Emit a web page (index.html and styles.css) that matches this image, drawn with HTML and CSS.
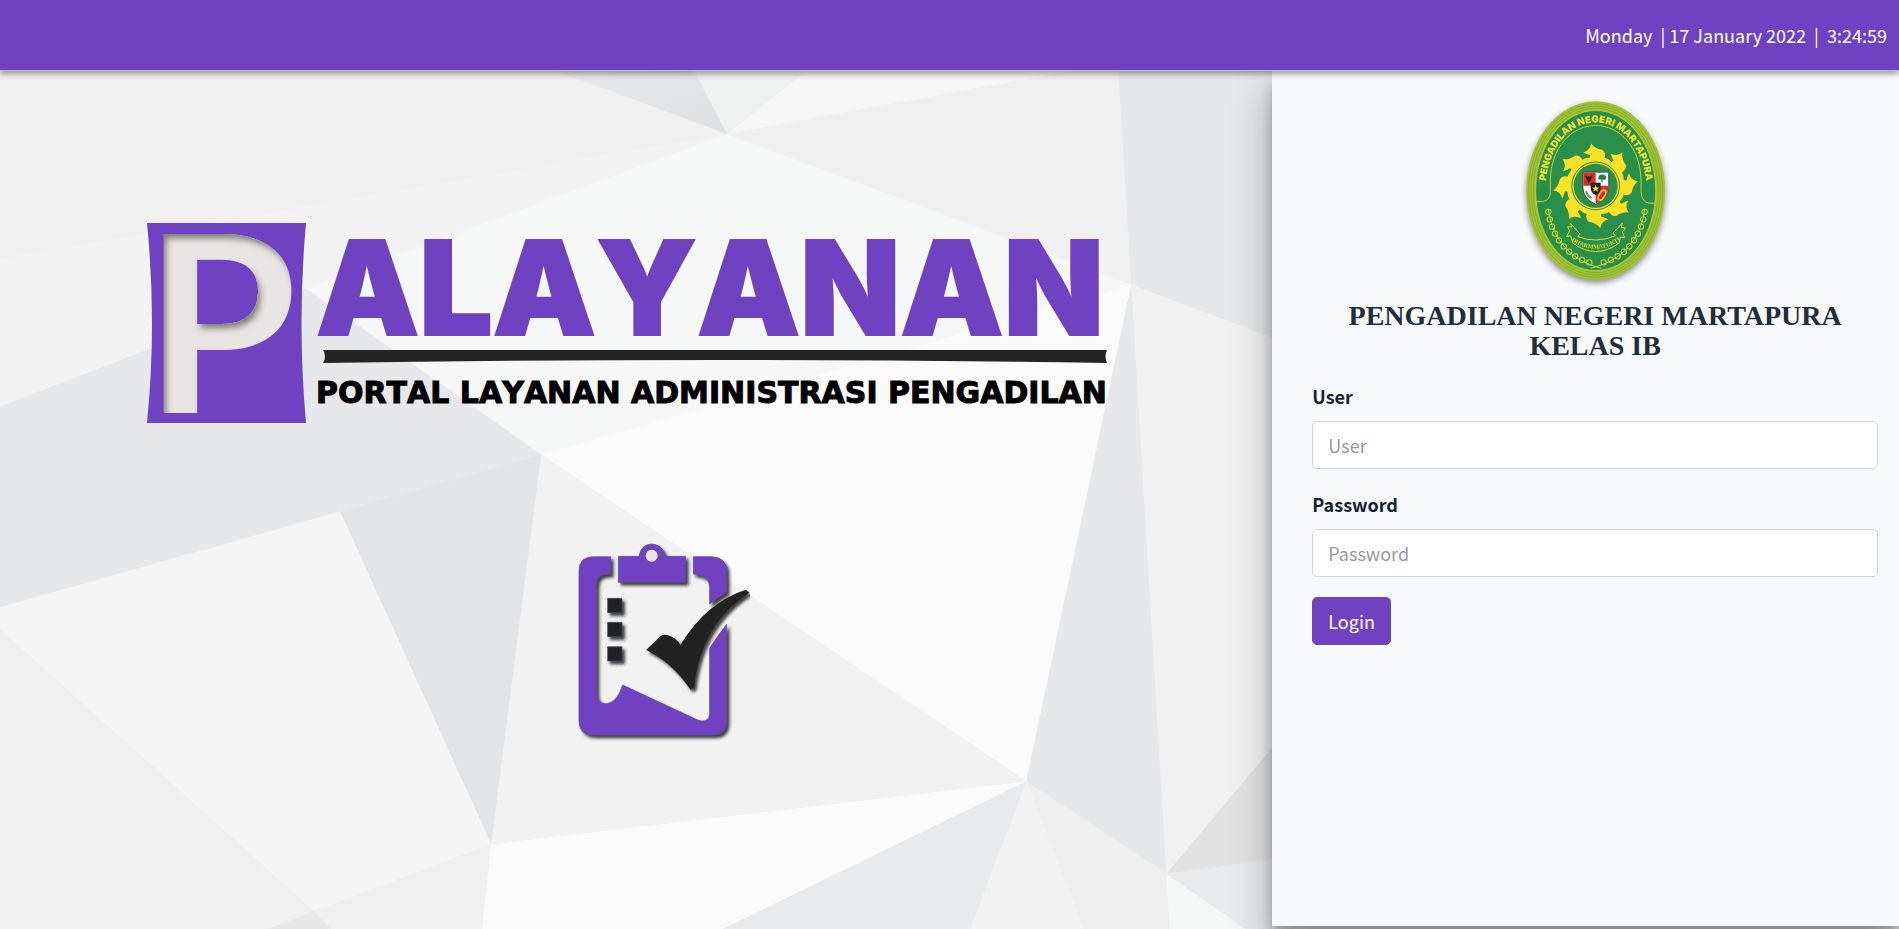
FILE: index.html
```html
<!DOCTYPE html>
<html lang="id">
<head>
<meta charset="utf-8">
<title>PALAYANAN</title>
<link rel="stylesheet" href="styles.css">
</head>
<body>
<header class="topbar"><time class="clock">Monday&nbsp; | 17 January 2022&nbsp; |&nbsp; 3:24:59</time></header>
<main class="page">
  <section class="hero">
    <svg class="hero-bg" viewBox="0 70 1272 859" preserveAspectRatio="none" aria-hidden="true">
      <defs>
        <linearGradient id="dark" x1="0" y1="0" x2="1" y2="1"><stop offset="0" stop-color="#e9ebec"/><stop offset="1" stop-color="#dddfe1"/></linearGradient>
      </defs>
      <path fill="#f0f0f0" d="M0 70H1272V929H0Z"/>
      <path fill="#f3f3f3" d="M727 133L0 258V406L306 288Z"/>
      <path fill="url(#dark)" d="M556 70H694L727 133Z"/>
      <path fill="#eff1f1" d="M694 70H806L727 133Z"/>
      <path fill="#f6f6f6" d="M806 70H1070L727 133Z"/>
      <path fill="#e6e8ea" d="M1118 70H1272V337L1131 284Z"/>
      <path fill="#f6f8f8" d="M306 288L727 133L1131 284L541 454Z"/>
      <path fill="#fbfbfb" d="M1131 284L541 454L1026 781Z"/>
      <path fill="#f1f1f1" d="M1131 284L1272 337V747L1166 874Z"/>
      <path fill="#e6e8e9" d="M1131 284L1166 874L1026 781Z"/>
      <path fill="#e2e2e2" d="M1272 747V859L1166 874Z"/>
      <path fill="#e8eaec" d="M1272 859V929H1245L1166 874Z"/>
      <path fill="#f5f7f6" d="M1166 874L1245 929H1169Z"/>
      <path fill="#eeeeee" d="M1026 781L1166 874L1169 929H1084Z"/>
      <path fill="#f2f2f2" d="M1026 781L1084 929H970Z"/>
      <path fill="#e8eaec" d="M1026 781L970 929H722Z"/>
      <path fill="#fbfbfb" d="M491 844L1026 781L722 929H482Z"/>
      <path fill="#f2f2f2" d="M541 454L1026 781L491 844Z"/>
      <path fill="#e6e8ea" d="M306 288L541 454L340 511L0 607V406Z"/>
      <path fill="#e2e4e6" d="M541 454L340 511L491 844Z"/>
      <path fill="#f5f5f5" d="M340 511L491 844L314 911L0 629V607Z"/>
      <path fill="#e8e8e8" d="M314 911L331 929H268Z"/>
    </svg>
    <div class="hero-content">
      <svg class="wordmark" viewBox="136 213 1000 220" role="img" aria-label="PALAYANAN, Portal Layanan Administrasi Pengadilan">
        <defs>
          <filter id="inset" x="-10%" y="-10%" width="120%" height="120%">
            <feComponentTransfer in="SourceAlpha"><feFuncA type="table" tableValues="1 0"/></feComponentTransfer>
            <feGaussianBlur stdDeviation="3"/>
            <feOffset dx="3" dy="5"/>
            <feComposite in2="SourceAlpha" operator="in"/>
            <feColorMatrix result="shade" values="0 0 0 0 .2  0 0 0 0 .2  0 0 0 0 .15  0 0 0 1 0"/>
            <feMerge><feMergeNode in="SourceGraphic"/><feMergeNode in="shade"/></feMerge>
          </filter>
        </defs>
        <path fill="#6f42c1" d="M147 223H306Q297 323 306 423H147Q157 323 147 223Z"/>
        <text class="mark-p" x="144" y="413" filter="url(#inset)">P</text>
        <text class="mark-name" x="316" y="335">ALAYANAN</text>
        <path fill="#242424" d="M323 350H1107Q1104 356 1107 363Q715 357 323 363Q327 356 323 350Z"/>
        <text class="mark-sub" x="316" y="403">PORTAL LAYANAN ADMINISTRASI PENGADILAN</text>
      </svg>
      <svg class="clipboard" viewBox="-114 0 684 660" role="img" aria-label="Clipboard">
        <defs><filter id="drop" x="-10%" y="-10%" width="125%" height="125%"><feDropShadow dx="8" dy="9" stdDeviation="4" flood-color="#222" flood-opacity=".85"/></filter></defs>
        <g filter="url(#drop)" fill="#6f42c1" stroke="#5c4a92" stroke-width="2">
          <path d="M152 80H98Q57 82 57 122V572Q57 615 100 615H458Q500 615 500 572V283Q470 320 449 355V552Q447 575 425 573Q415 572 400 564L188 465Q170 520 138 521Q109 520 109 488V165Q109 134 140 133H152Z"/>
          <path d="M400 80H455Q500 82 500 125V187Q470 205 449 222V168Q447 135 400 132Z"/>
          <path d="M175 79H237Q243 43 275 42Q308 43 316 79H377V157H175Z"/>
        </g>
        <circle cx="275" cy="77" r="18" fill="#e8e4e4"/>
        <g filter="url(#drop)" fill="#242424">
          <path stroke="#3b5160" stroke-width="2" d="M143 205H186V248H143ZM143 277H186V320H143ZM143 350H186V393H143Z"/>
          <path d="M258 360L302 318Q312 312 325 316Q348 323 361 345Q440 215 558 179L568 188C450 265 415 370 402 470L392 480Q335 395 258 360Z"/>
        </g>
      </svg>
    </div>
  </section>
  <aside class="panel">
    <svg class="seal" viewBox="75 64 417 536" role="img" aria-label="Pengadilan Negeri Martapura">
      <defs>
        <path id="arc" d="M133 345C131 215 200 128 284 128S439 215 437 345"/>
        <path id="rib" d="M210 482Q284 532 360 480"/>
        <path id="flame" d="M-52 -64Q-14 -74 -16 -92Q-28 -95 -38 -100Q-16 -106 -14 -127Q0 -110 20 -108Q32 -99 27 -84Q40 -82 54 -64Z"/>
      </defs>
      <ellipse cx="284" cy="332" rx="208" ry="268" fill="#a3c22f"/>
      <g fill="none" stroke="#6fa836" stroke-width="2"><ellipse cx="284" cy="332" rx="201" ry="260"/><ellipse cx="284" cy="332" rx="194" ry="253"/><ellipse cx="284" cy="332" rx="187" ry="246"/></g>
      <ellipse cx="284" cy="332" rx="180" ry="240" fill="#2b8f4c" stroke="#d4d82c" stroke-width="2"/>
      <path fill="none" stroke="#c5d42f" stroke-width="3" d="M105 365H125Q148 362 148 335V300C150 205 210 137 284 137S418 205 420 300V335Q422 368 445 370H463"/>
      <text class="seal-text" text-anchor="middle"><textPath href="#arc" startOffset="50%">PENGADILAN NEGERI MARTAPURA</textPath></text>
      <g transform="translate(284 318)" fill="#fbe126">
        <circle r="84"/>
        <use href="#flame"/><use href="#flame" transform="rotate(45)"/><use href="#flame" transform="rotate(90)"/><use href="#flame" transform="rotate(135)"/><use href="#flame" transform="rotate(180)"/><use href="#flame" transform="rotate(225)"/><use href="#flame" transform="rotate(270)"/><use href="#flame" transform="rotate(315)"/>
        <circle r="73" fill="#2b8f4c"/><circle r="70"/><circle r="66" fill="#2b8f4c"/>
      </g>
      <path fill="#fff" stroke="#222" stroke-width="2" d="M246 277H323V325Q322 356 284 373Q247 356 246 325Z"/>
      <path fill="#e02c26" d="M247 278H284V318H247ZM284 318H322V325Q321 355 284 371Z"/>
      <path fill="#222" d="M252 287L260 291H266L274 286L270 301L263 311L257 300ZM269 309H299V326Q297 340 284 346Q271 340 269 326Z"/>
      <path fill="#218441" d="M301 307V299Q288 301 292 292Q295 282 303 284Q315 283 316 295Q314 302 305 299V307Z"/>
      <path fill="#fbe126" d="M284 315L287 323H295L289 328L291 336L284 331L277 336L279 328L273 323H281Z"/>
      <ellipse cx="303" cy="346" rx="8" ry="17" transform="rotate(32 303 346)" fill="none" stroke="#fbe126" stroke-width="4"/>
      <path d="M255 334Q260 349 272 355" fill="none" stroke="#6d9b3d" stroke-width="6"/>
      <g fill="none" stroke-linecap="round">
        <path stroke="#cfd92e" stroke-width="19" stroke-dasharray="0 23" d="M142 396C150 460 195 540 286 552"/>
        <path stroke="#2b8f4c" stroke-width="13" stroke-dasharray="0 23" d="M142 396C150 460 195 540 286 552"/>
        <path stroke="#cfd92e" stroke-width="19" stroke-dasharray="0 23" d="M431 396C423 460 378 540 286 552"/>
        <path stroke="#2b8f4c" stroke-width="13" stroke-dasharray="0 23" d="M431 396C423 460 378 540 286 552"/>
        <path stroke="#cfd92e" stroke-width="3" d="M142 388C150 460 195 540 300 565M431 388C423 460 378 540 270 565"/>
      </g>
      <path fill="#2b8f4c" stroke="#e0dd2a" stroke-width="3" d="M209 468L197 470L206 453L200 441L212 441L208 430L237 463L230 470Q284 492 343 468L336 460L364 430L361 443L374 444L364 457L371 473L358 472L354 490Q284 540 216 490Z"/>
      <text class="ribbon-text" text-anchor="middle"><textPath href="#rib" startOffset="50%">DHARMMAYUKTI</textPath></text>
    </svg>
    <h1 class="title">PENGADILAN NEGERI MARTAPURA<br>KELAS IB</h1>
    <form class="form">
      <label class="label" for="user">User</label>
      <input class="input" id="user" type="text" placeholder="User">
      <label class="label" for="password">Password</label>
      <input class="input" id="password" type="password" placeholder="Password">
      <button class="button" type="submit">Login</button>
    </form>
  </aside>
</main>
</body>
</html>
```
FILE: styles.css
```css
* { box-sizing: border-box; }
body {
  margin: 0;
  min-height: 100vh;
  display: flex;
  flex-direction: column;
  background: #f0f0f0;
  color: #1f2d3d;
  font: 18px/30px "Noto Sans CJK SC", "Open Sans", sans-serif;
}
.topbar {
  position: relative;
  z-index: 2;
  height: 71px;
  padding: 0 12px;
  display: flex;
  align-items: center;
  justify-content: flex-end;
  background: #6f42c1;
  border-bottom: 1px solid #c4b3e6;
  box-shadow: 0 3px 6px rgba(0, 0, 0, .16), 0 3px 6px rgba(0, 0, 0, .23);
  color: #fff;
}
.page {
  flex: 1;
  display: grid;
  grid-template-columns: 67% 33%;
  overflow: hidden;
}
.hero { display: grid; }
.hero-bg {
  grid-area: 1 / 1;
  width: 100%;
  height: 100%;
  min-height: 0;
  contain: size;
}
.hero-content {
  grid-area: 1 / 1;
  position: relative;
  display: flex;
  flex-direction: column;
  align-items: center;
  gap: 97px;
  padding-top: 142px;
}
.wordmark { width: 1000px; max-width: 100%; overflow: visible; }
.mark-p { font: 700 247px Lato, sans-serif; fill: #e8e4e4; }
.mark-name {
  font: 900 130px Inter, sans-serif;
  font-kerning: none;
  fill: #6f42c1;
  stroke: #6f42c1;
  stroke-width: 2px;
}
.mark-sub {
  font: 700 30px "DejaVu Sans", sans-serif;
  font-kerning: none;
  fill: #000;
  stroke: #000;
  stroke-width: 1px;
}
.clipboard { width: 228px; }
.panel {
  position: relative;
  margin-bottom: 3px;
  padding: 30px 21px 30px 40px;
  display: flex;
  flex-direction: column;
  align-items: center;
  background: #f8f9fb;
  box-shadow: 0 19px 38px rgba(0, 0, 0, .3), 0 15px 12px rgba(0, 0, 0, .22);
}
.seal {
  width: 139px;
  height: 179px;
  filter: drop-shadow(0 3px 3px rgba(0, 0, 0, .45));
}
.seal-text { font: 900 29px Inter, sans-serif; fill: #f2e52a; }
.ribbon-text { font: 700 18px "Liberation Serif", serif; fill: #e0dd2a; }
.title {
  margin: 21px 0 20px;
  font: 700 28px/30px "Liberation Serif", serif;
  text-align: center;
}
.form {
  width: 100%;
  display: flex;
  flex-direction: column;
  align-items: flex-start;
}
.label { margin-bottom: 10px; color: #172230; font-weight: 700; }
.input {
  width: 100%;
  height: 48px;
  margin-bottom: 20px;
  padding: 0 15px;
  border: 1px solid #ced4da;
  border-radius: 5px;
  background: #fff;
  color: #495057;
  font: inherit;
}
.input::placeholder { color: #939ba2; opacity: 1; }
.button {
  height: 48px;
  padding: 0 15px;
  border: 1px solid #6f42c1;
  border-radius: 5px;
  background: #6f42c1;
  color: #fff;
  font: inherit;
}
```
